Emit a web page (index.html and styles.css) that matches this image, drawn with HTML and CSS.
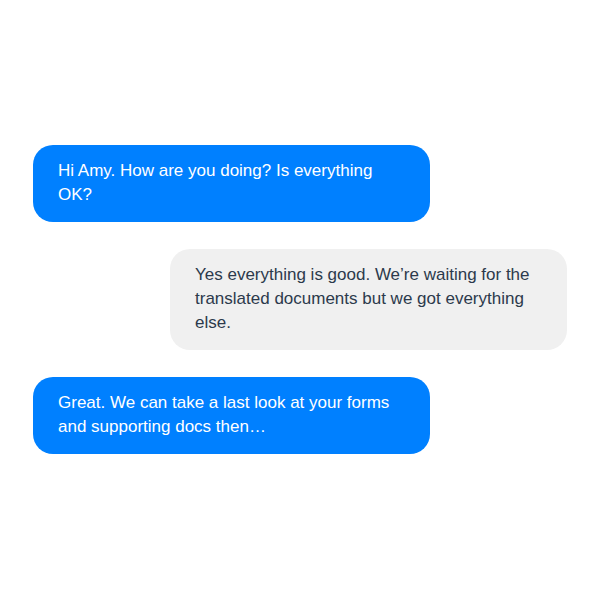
FILE: index.html
```html
<!DOCTYPE html>
<html lang="en">
<head>
    <meta charset="UTF-8">
    <meta name="viewport" content="width=device-width, initial-scale=1.0">
    <title>Chat</title>
    <link rel="stylesheet" href="styles.css">
</head>
<body>
    <div class="thread">
        <div class="bubble sent">Hi Amy. How are you doing? Is everything OK?</div>
        <div class="bubble received">Yes everything is good. We’re waiting for the translated documents but we got everything else.</div>
        <div class="bubble sent">Great. We can take a last look at your forms and supporting docs then…</div>
    </div>
</body>
</html>
```

FILE: styles.css
```css
body {
    margin: 0;
    background-color: #fff;
    font-family: "Liberation Sans", Arial, sans-serif;
}
.thread {
    display: flex;
    flex-direction: column;
    gap: 27px;
    padding: 145px 33px;
}
.bubble {
    box-sizing: border-box;
    width: 397px;
    padding: 14px 25px 15px;
    border-radius: 20px;
    font-size: 17px;
    line-height: 24px;
}
.sent {
    background-color: #0080ff;
    color: #fff;
}
.received {
    align-self: flex-end;
    background-color: #f0f0f0;
    color: #2c3a4c;
}
```
